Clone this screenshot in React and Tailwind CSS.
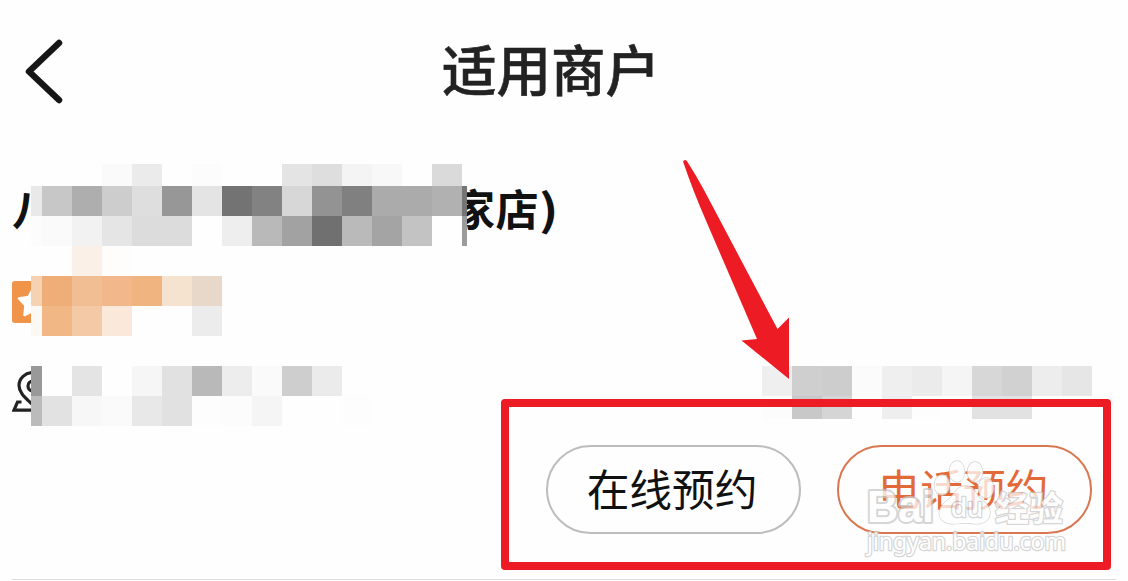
const _ = '#fefefe'

// one row per band of the mosaic
const NAME_MOSAIC = [
  [_, _, _, '#fafafa', '#ebebeb', _, '#fcfcfc', _, _, '#e4e4e4', '#dedede', '#f4f4f4', '#f8f8f8', _, '#dadada', _],
  ['#e9e9e9', '#c7c7c7', '#aeaeae', '#cdcdcd', '#dedede', '#979797', '#e4e4e4', '#737373', '#828282', '#d7d7d7', '#939393', '#808080', '#ababab', '#ababab', '#b1b1b1', '#757575'],
  ['#fcfcfc', '#fafafa', '#f2f2f2', '#e5e5e5', '#dcdcdc', '#dcdcdc', _, '#eeeeee', '#b9b9b9', '#a2a2a2', '#707070', '#bababa', '#a4a4a4', '#c3c3c3', _, '#9c9c9c'],
]

const RATING_MOSAIC = [
  [_, _, '#fbf0e8', '#fffdfb', _, _, _],
  ['#f6d2b5', '#efae77', '#f0be92', '#f2b88b', '#efb47f', '#f5e2cf', '#e8d8c9'],
  ['#fcf8f4', '#f1b886', '#f4caa6', '#fae8db', _, _, '#ececec'],
]

const ADDRESS_MOSAIC = [
  ['#999999', _, '#e4e4e4', _, '#f6f6f6', '#e1e1e1', '#b9b9b9', '#ededed', '#fafafa', '#cecece', '#ebebeb', _],
  ['#bbbbbb', '#e2e2e2', '#f7f7f7', '#fafafa', '#e8e8e8', '#e1e1e1', '#fdfdfd', '#fcfcfc', '#f5f5f5', _, _, '#fdfdfd'],
]

const DISTANCE_MOSAIC = [
  ['#efefef', '#cfcfcf', '#cdcdcd', '#fbfbfb', '#efefef', '#ebebeb', '#f5f5f5', '#d7d7d7', '#d1d1d1', '#ededed', '#e6e6e6'],
  ['#fcfcfc', '#c8c8c8', '#d5d5d5', _, '#eeeeee', '#fdfdfd', _, '#e2e2e2', '#e2e2e2', _, _],
]

function Mosaic({ rows, firstWidth = 30, lastWidth = 30, firstHeight = 30, lastHeight = 30 }) {
  const size = (i, length, first, last) => {
    if (i === 0) return first
    return i === length - 1 ? last : 30
  }

  return (
    <div className="flex shrink-0 flex-col">
      {rows.map((row, r) => (
        <div key={r} className="flex" style={{ height: size(r, rows.length, firstHeight, lastHeight) }}>
          {row.map((color, c) => (
            <span
              key={c}
              className="shrink-0"
              style={{ width: size(c, row.length, firstWidth, lastWidth), backgroundColor: color }}
            />
          ))}
        </div>
      ))}
    </div>
  )
}

function BackIcon() {
  return (
    <svg width="48" height="72" viewBox="0 0 48 72" fill="none">
      <path d="M39 7 L9 35.5 L39 64" stroke="#161616" strokeWidth="6.5" strokeLinecap="round" strokeLinejoin="round" />
    </svg>
  )
}

function StarBadge() {
  return (
    <svg width="42" height="42" viewBox="0 0 42 42" className="shrink-0">
      <rect width="42" height="42" rx="3" fill="#f09449" />
      <path
        d="M21 8 L25 16 L35 17 L28 24.5 L30 34 L21 30 L12.5 34 L13.5 24.5 L7 17.5 L16.5 16 Z"
        fill="#fff"
        stroke="#fff"
        strokeWidth="2.5"
        strokeLinejoin="round"
      />
    </svg>
  )
}

function PinIcon() {
  return (
    <svg width="42" height="42" viewBox="0 0 42 42" fill="none" stroke="#222" strokeWidth="3.2" className="shrink-0">
      <path d="M21 34 C15 28 7 22.5 7 14.5 A14 13 0 0 1 35 14.5 C35 22.5 27 28 21 34 Z" />
      <circle cx="21" cy="15" r="5" />
      <path d="M9.5 31 H5.5 L2 39.2 H40 L36.5 31 H32.5" />
    </svg>
  )
}

function Watermark() {
  return (
    <svg
      className="absolute left-[860px] top-[455px] opacity-75"
      width="212"
      height="106"
      viewBox="0 0 212 106"
      fill="#fff"
      stroke="#c9c9c9"
      strokeWidth="2.5"
      strokeLinejoin="round"
      paintOrder="stroke"
    >
      <text x="7" y="67" fontSize="44" fontWeight="700" fontFamily="Liberation Sans, sans-serif" strokeWidth="4" textLength="67" lengthAdjust="spacingAndGlyphs">
        Bai
      </text>
      <g strokeWidth="1.5">
        <ellipse cx="82" cy="30" rx="7.5" ry="10" />
        <ellipse cx="97" cy="16.5" rx="7.5" ry="10.5" />
        <ellipse cx="115" cy="17" rx="7.5" ry="10" />
        <ellipse cx="126" cy="33" rx="7.5" ry="10" />
        <path d="M106 31 C96 31 95 40 88 45 C79 51 77 60 82 65 C88 71 98 68 106 68 C114 68 121 71 127 65 C133 59 129 50 122 45 C115 40 115 31 106 31 Z" />
      </g>
      <text x="91" y="62" fontSize="28" fontWeight="400" fontFamily="Liberation Sans, sans-serif" textLength="32" lengthAdjust="spacingAndGlyphs">
        du
      </text>
      <text x="135" y="66" fontSize="34" fontWeight="700" fontFamily="Noto Sans CJK SC, sans-serif">经验</text>
      <text x="7" y="95" fontSize="23" textLength="199" lengthAdjust="spacingAndGlyphs" fontFamily="Noto Sans, sans-serif">
        jingyan.baidu.com
      </text>
    </svg>
  )
}

function Arrow() {
  return (
    <svg className="absolute left-[680px] top-[155px]" width="112" height="226" viewBox="0 0 112 226">
      <path d="M3.2 7 Q3 5 5 5 Q6.5 5 7.2 6.5 Q16 20 24 35 L97.5 174 L109 162.5 V224 L61.5 185.5 L77 184 L27 68 Q13 36 3.2 7 Z" fill="#ed1c24" />
    </svg>
  )
}

export default function App() {
  return (
    <div className="relative h-[581px] w-[1128px] overflow-hidden bg-[#fefefe] font-['Noto_Sans_CJK_SC',sans-serif]">
      <header className="grid h-36 grid-cols-[1fr_auto_1fr] items-center pl-5 pr-[46px]">
        <BackIcon />
        <h1 className="pb-[7px] text-[54.5px] leading-none font-medium text-[#222] [-webkit-text-stroke:0.6px_#222]">适用商户</h1>
      </header>

      <main className="px-3 pt-5">
        <div className="flex h-[82px] text-[43px] leading-[86px] font-bold text-[#111]">
          <span className="w-[19px] overflow-hidden whitespace-nowrap">八</span>
          <Mosaic rows={NAME_MOSAIC} firstWidth={11} lastWidth={5} firstHeight={22} />
          <div className="overflow-hidden">
            <span className="-ml-[15px] tracking-[0.5px]">
              家店<span className="inline-block origin-left scale-x-120">)</span>
            </span>
          </div>
        </div>

        <div className="flex h-[90px]">
          <div className="flex w-[19px] items-center overflow-hidden pt-[22px]">
            <StarBadge />
          </div>
          <Mosaic rows={RATING_MOSAIC} firstWidth={11} />
        </div>

        <div className="mt-[30px] flex h-[60px] justify-between pr-6">
          <div className="flex">
            <div className="w-[19px] overflow-hidden pt-[5px]">
              <PinIcon />
            </div>
            <Mosaic rows={ADDRESS_MOSAIC} firstWidth={11} />
          </div>
          <Mosaic rows={DISTANCE_MOSAIC} lastHeight={23} />
        </div>

        <div className="mt-[19px] flex justify-end gap-9 pr-6">
          <button className="h-[89px] w-[255px] rounded-full border-2 border-[#bdbdbd] pr-[3px] pb-[5px] text-[42.7px] leading-none text-[#111]">
            在线预约
          </button>
          <button className="h-[89px] w-[255px] rounded-full border-2 border-[#d97850] pr-[3px] pb-[5px] text-[42.7px] leading-none text-[#e26a38]">
            电话预约
          </button>
        </div>
        <div className="mt-[45px] h-px bg-[#dedede]" />
      </main>

      <Watermark />
      <Arrow />
      <div className="absolute left-[501px] top-[399px] h-[171px] w-[610px] rounded-[4px] border-8 border-[#ed1c24]" />
    </div>
  )
}
